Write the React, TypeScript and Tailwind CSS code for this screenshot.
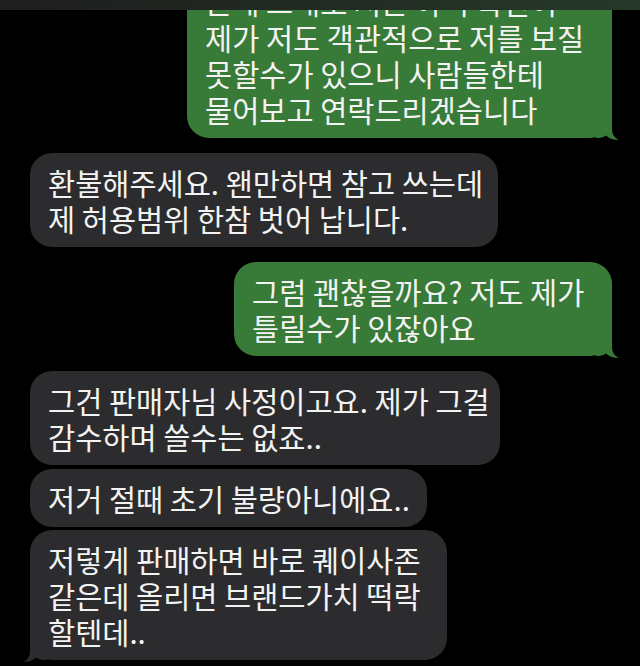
import React from "react";

type Msg = {
  from: "me" | "them";
  lines: string[];
  width: number;
  tail?: boolean;
  gap: string;
};

const messages: Msg[] = [
  {
    from: "me",
    lines: [
      "근데 그래도 저는 아직 확신이",
      "제가 저도 객관적으로 저를 보질",
      "못할수가 있으니 사람들한테",
      "물어보고 연락드리겠습니다",
    ],
    width: 425,
    tail: true,
    gap: "-mt-[28px]",
  },
  {
    from: "them",
    lines: ["환불해주세요. 왠만하면 참고 쓰는데", "제 허용범위 한참 벗어 납니다."],
    width: 468,
    gap: "mt-[15px]",
  },
  {
    from: "me",
    lines: ["그럼 괜찮을까요? 저도 제가", "틀릴수가 있잖아요"],
    width: 378,
    tail: true,
    gap: "mt-[15px]",
  },
  {
    from: "them",
    lines: ["그건 판매자님 사정이고요. 제가 그걸", "감수하며 쓸수는 없죠.."],
    width: 470,
    gap: "mt-[15px]",
  },
  {
    from: "them",
    lines: ["저거 절때 초기 불량아니에요.."],
    width: 397,
    gap: "mt-[4px]",
  },
  {
    from: "them",
    lines: ["저렇게 판매하면 바로 퀘이사존", "같은데 올리면 브랜드가치 떡락", "할텐데.."],
    width: 417,
    tail: true,
    gap: "mt-[3px]",
  },
];

function Tail({ mine }: { mine: boolean }) {
  return (
    <svg
      width="24"
      height="24"
      viewBox="0 0 24 24"
      className={
        mine
          ? "absolute -right-[8px] -bottom-[2px]"
          : "absolute -left-[8px] -bottom-[2px] -scale-x-100"
      }
    >
      <path
        d="M0 0 L16 0 L16 13 C16 19 19 22 23 24 C18 24 13 22.5 10 19.5 C7.5 21.5 4 22 0 22 Z"
        fill={mine ? "#387a37" : "#2c2c2e"}
      />
    </svg>
  );
}

function Bubble({ msg }: { msg: Msg }) {
  const mine = msg.from === "me";
  return (
    <div className={`flex ${mine ? "justify-end pr-[28px]" : "justify-start pl-[30px]"} ${msg.gap}`}>
      <div
        className={`relative rounded-[22px] pl-[18px] py-[11px] ${mine ? "bg-[#387a37]" : "bg-[#2c2c2e]"}`}
        style={{ width: msg.width }}
      >
        <p className="relative whitespace-nowrap text-[29.5px] leading-[36px] text-[#f3f3f3]">
          {msg.lines.map((l, i) => (
            <React.Fragment key={i}>
              {i > 0 && <br />}
              {l}
            </React.Fragment>
          ))}
        </p>
        {msg.tail && <Tail mine={mine} />}
      </div>
    </div>
  );
}

export default function App() {
  return (
    <div
      className="relative h-[666px] w-[640px] overflow-hidden bg-black"
      style={{ fontFamily: '"Noto Sans CJK KR", "Noto Sans", sans-serif' }}
    >
      <div className="flex flex-col">
        {messages.map((m, i) => (
          <Bubble key={i} msg={m} />
        ))}
      </div>
      {/* blurred header strip */}
      <div className="absolute inset-x-0 top-0 h-[10px] bg-gradient-to-r from-[#1e1e1e] via-[#222a23] to-[#26392a]" />
    </div>
  );
}
